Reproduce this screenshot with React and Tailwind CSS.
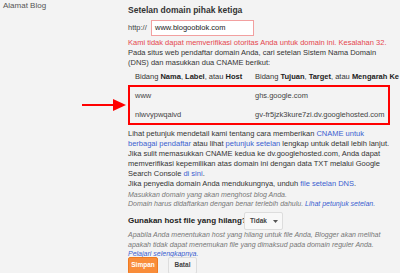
export default function App() {
  return (
    <main
      className="relative flex h-[273px] w-[400px] overflow-hidden bg-[#f3f3f3] text-[7.5px] leading-[10px] text-[#333]"
      style={{ fontFamily: '"Liberation Sans", Arial, sans-serif' }}
    >
      <div className="w-[128px] shrink-0 pl-[3px] pt-[1px] text-[8px] text-[#555]">Alamat Blog</div>

      <div className="flex-1 whitespace-nowrap">
        <h2 className="mt-[5px] text-[8.5px] font-semibold leading-[11px] text-[#333]">
          Setelan domain pihak ketiga
        </h2>

        <div className="mt-[4px] flex h-[16px] items-center">
          <span className="w-[23px] text-[#444]">http://</span>
          <div className="flex h-[16px] w-[103px] items-center border border-[#f2a0a0] bg-white px-[3px] text-[#222]">
            www.blogooblok.com
          </div>
        </div>

        <p className="mt-[2px] leading-[10px] text-[#e5474f]">
          Kami tidak dapat memverifikasi otoritas Anda untuk domain ini. Kesalahan 32.
        </p>
        <p className="leading-[9.5px]">
          Pada situs web pendaftar domain Anda, cari setelan Sistem Nama Domain
          <br />
          (DNS) dan masukkan dua CNAME berikut:
        </p>

        <div className="mt-[5px] flex h-[10px] items-center pl-[7px]">
          <span className="w-[120px]">
            Bidang <b className="font-semibold text-[#222]">Nama</b>, <b className="font-semibold text-[#222]">Label</b>, atau <b className="font-semibold text-[#222]">Host</b>
          </span>
          <span>
            Bidang <b className="font-semibold text-[#222]">Tujuan</b>, <b className="font-semibold text-[#222]">Target</b>, atau <b className="font-semibold text-[#222]">Mengarah Ke</b>
          </span>
        </div>

        <div className="mt-[3px] flex h-[40px] w-[262px] flex-col justify-center gap-[9px] border-2 border-[#ff0000] pl-[5px] text-[#444]">
          <div className="flex h-[10px] items-center">
            <span className="w-[120px]">www</span>
            <span>ghs.google.com</span>
          </div>
          <div className="flex h-[10px] items-center">
            <span className="w-[120px]">nlwvypwqaivd</span>
            <span>gv-fr5jzk3kure7zi.dv.googlehosted.com</span>
          </div>
        </div>

        <p className="mt-[4px] leading-[10px]">
          Lihat petunjuk mendetail kami tentang cara memberikan{" "}
          <a className="text-[#3b5fd0]">CNAME untuk</a>
          <br />
          <a className="text-[#3b5fd0]">berbagai pendaftar</a> atau lihat{" "}
          <a className="text-[#3b5fd0]">petunjuk setelan</a> lengkap untuk detail lebih lanjut.
          <br />
          Jika sulit memasukkan CNAME kedua ke dv.googlehosted.com, Anda dapat
          <br />
          memverifikasi kepemilikan atas domain ini dengan data TXT melalui Google
          <br />
          Search Console <a className="text-[#3b5fd0]">di sini</a>.
          <br />
          Jika penyedia domain Anda mendukungnya, unduh{" "}
          <a className="text-[#3b5fd0]">file setelan DNS</a>.
        </p>

        <p className="mt-[1px] text-[7px] italic leading-[9px] text-[#777]">
          Masukkan domain yang akan menghost blog Anda.
          <br />
          Domain harus didaftarkan dengan benar terlebih dahulu.{" "}
          <a className="text-[#3b5fd0]">Lihat petunjuk setelan.</a>
        </p>

        <div className="mt-[4px] flex h-[18px] items-center">
          <span className="w-[116px] text-[8px] font-semibold text-[#222]">
            Gunakan host file yang hilang?
          </span>
          <div className="flex h-[18px] w-[39px] items-center gap-[6px] rounded-[2px] border border-[#ddd] bg-[#f8f8f8] pl-[5px] text-[6.5px] font-semibold text-[#444]">
            Tidak
            <svg width="5" height="3" viewBox="0 0 5 3">
              <path d="M0 0h5L2.5 3z" fill="#555" />
            </svg>
          </div>
        </div>

        <p className="text-[7px] italic leading-[9.5px] text-[#777]">
          Apabila Anda menentukan host yang hilang untuk file Anda, Blogger akan melihat
          <br />
          apakah tidak dapat menemukan file yang dimaksud pada domain reguler Anda.
          <br />
          <a className="text-[#3b5fd0]">Pelajari selengkapnya.</a>
        </p>

        <div className="-mt-[2px] flex gap-[10px]">
          <button className="h-[17px] w-[30px] rounded-[2px] border border-[#f07a20] bg-[#f98d3a] text-[6.5px] font-bold text-white">
            Simpan
          </button>
          <button className="h-[17px] w-[29px] rounded-[2px] border border-[#ddd] bg-[#f5f5f5] text-[6.5px] font-bold text-[#444]">
            Batal
          </button>
        </div>
      </div>

      <svg className="absolute left-[82px] top-[98px]" width="44" height="14" viewBox="0 0 44 14">
        <path d="M0 7h33" stroke="#ff0000" strokeWidth="2" />
        <path d="M31 1L44 7L31 13z" fill="#ff0000" />
      </svg>
    </main>
  );
}
